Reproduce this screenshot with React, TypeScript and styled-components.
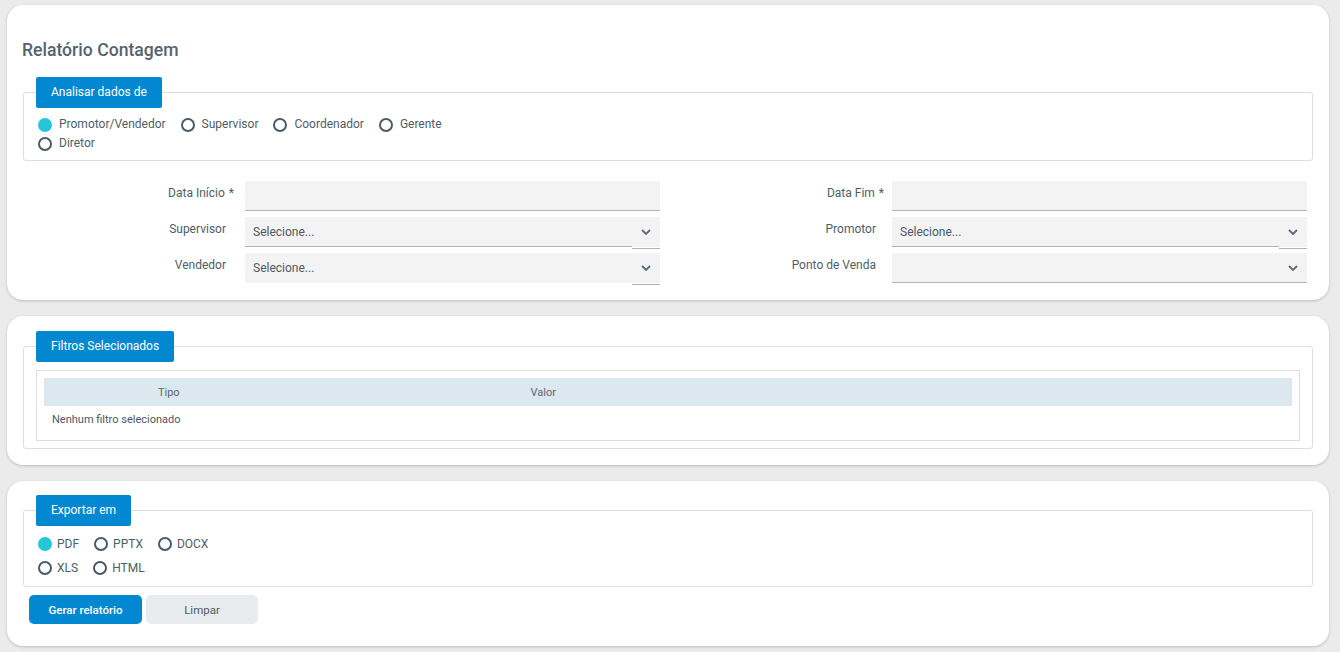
import React from 'react';
import styled, { createGlobalStyle } from 'styled-components';

const GlobalStyle = createGlobalStyle`
  html, body { margin: 0; padding: 0; background: #ebebeb; }
  body { font-family: Roboto, "Liberation Sans", Arial, sans-serif; color: #4f5d69; }
  * { box-sizing: border-box; }
`;

const Page = styled.div`
  display: flex;
  flex-direction: column;
  gap: 16px;
  padding: 5px 11px 6px 7px;
`;

const Card = styled.section<{ $pad: string }>`
  background: #fff;
  border-radius: 16px;
  box-shadow: 0 1px 3px rgba(0, 0, 0, 0.2);
  padding: ${(p) => p.$pad};
`;

const Title = styled.h1`
  margin: 18px 0 16px -1px;
  font-size: 17.6px;
  line-height: 22px;
  font-weight: 500;
  color: #56636e;
`;

const Group = styled.fieldset<{ $pb: number }>`
  margin: 0;
  min-width: 0;
  border: 1px solid #dedede;
  border-radius: 3px;
  padding: 0 12px ${(p) => p.$pb}px;
`;

const Legend = styled.legend`
  padding: 0 15px;
  height: 31px;
  line-height: 31px;
  background: #0288d1;
  color: #fff;
  font-size: 12px;
  border-radius: 2px;
`;

const RadioGroup = styled.div<{ $max: number; $lh: number; $mt: number }>`
  display: flex;
  flex-wrap: wrap;
  max-width: ${(p) => p.$max}px;
  margin-top: ${(p) => p.$mt}px;
  padding-left: 2px;
  line-height: ${(p) => p.$lh}px;
  font-size: 12px;
`;

const RadioItem = styled.label<{ $gap: number }>`
  display: inline-flex;
  align-items: center;
  gap: ${(p) => p.$gap}px;
  margin-right: 15px;
  color: #4f5d69;
  white-space: nowrap;
`;

const RadioDot = styled.span<{ $on: boolean }>`
  width: 14px;
  height: 14px;
  border-radius: 50%;
  border: 2px solid ${(p) => (p.$on ? '#26c6da' : '#4a5a66')};
  background: ${(p) => (p.$on ? '#26c6da' : '#fff')};
  flex: none;
`;

const FormGrid = styled.div`
  display: grid;
  grid-template-columns: 222px 415px 232px 415px;
  row-gap: 6px;
  margin-top: 20px;
`;

const FieldLabel = styled.div<{ $pr: number }>`
  text-align: right;
  padding: 4px ${(p) => p.$pr}px 0 0;
  font-size: 12px;
  line-height: 16px;
  color: #4f5d69;
`;

const Req = styled.span`
  margin-left: 4px;
  margin-right: -8px;
`;

const TextInput = styled.div`
  height: 30px;
  background: #f3f3f3;
  border-bottom: 1px solid #a9b7c2;
`;

const SelectBox = styled.div`
  display: flex;
  align-items: flex-start;
  height: 30px;
`;

const SelectValue = styled.div<{ $line: boolean }>`
  flex: 1;
  height: 30px;
  display: flex;
  align-items: center;
  padding: 1px 8px 0;
  background: #f3f3f3;
  border-bottom: 1px solid ${(p) => (p.$line ? '#a9b7c2' : 'transparent')};
  font-size: 12px;
  color: #4f5a63;
`;

const SelectArrow = styled.div<{ $drop: boolean }>`
  width: 28px;
  height: ${(p) => (p.$drop ? 32 : 30)}px;
  padding-bottom: ${(p) => (p.$drop ? 1 : 0)}px;
  display: flex;
  align-items: center;
  justify-content: center;
  background: #f3f3f3;
  background-clip: content-box;
  border-bottom: 1px solid #a9b7c2;
`;

const TableBox = styled.div`
  margin-top: 8px;
  border: 1px solid #dedede;
  padding: 7px;
`;

const TableHead = styled.div`
  display: grid;
  grid-template-columns: 20% 40% 40%;
  height: 28px;
  align-items: center;
  background: #dce8ef;
  font-size: 11px;
  color: #5b6770;
  text-align: center;
`;

const TableEmpty = styled.div`
  height: 27px;
  display: flex;
  align-items: center;
  padding-left: 8px;
  font-size: 11px;
  color: #4b5a66;
`;

const ButtonRow = styled.div`
  display: flex;
  gap: 4px;
  margin: 8px 0 0 6px;
`;

const Button = styled.button<{ $primary?: boolean }>`
  height: 29px;
  width: ${(p) => (p.$primary ? 113 : 112)}px;
  border: none;
  border-radius: 5px;
  font-family: inherit;
  font-size: 11.5px;
  font-weight: ${(p) => (p.$primary ? 500 : 400)};
  background: ${(p) => (p.$primary ? '#0288d1' : '#e9ecef')};
  color: ${(p) => (p.$primary ? '#fff' : '#4f5b66')};
  cursor: pointer;
`;

const Chevron = () => (
  <svg width="10" height="6" viewBox="0 0 10 6">
    <path d="M1 1 L5 5 L9 1" fill="none" stroke="#5a6b79" strokeWidth="1.8" />
  </svg>
);

type Opt = { label: string; on?: boolean };

const Radios: React.FC<{ items: Opt[]; max: number; lh: number; mt: number; gap: number }> = ({ items, max, lh, mt, gap }) => (
  <RadioGroup $max={max} $lh={lh} $mt={mt}>
    {items.map((it) => (
      <RadioItem key={it.label} $gap={gap}>
        <RadioDot $on={!!it.on} />
        {it.label}
      </RadioItem>
    ))}
  </RadioGroup>
);

const Select: React.FC<{ value?: string; line?: boolean; drop?: boolean }> = ({ value = '', line = true, drop = true }) => (
  <SelectBox>
    <SelectValue $line={line}>{value}</SelectValue>
    <SelectArrow $drop={drop}>
      <Chevron />
    </SelectArrow>
  </SelectBox>
);

export default function App() {
  return (
    <>
      <GlobalStyle />
      <Page>
        <Card $pad="16px 16px 17px">
          <Title>Relatório Contagem</Title>
          <Group $pb={7}>
            <Legend>Analisar dados de</Legend>
            <Radios
              max={430}
              lh={19}
              mt={7}
              gap={7}
              items={[
                { label: 'Promotor/Vendedor', on: true },
                { label: 'Supervisor' },
                { label: 'Coordenador' },
                { label: 'Gerente' },
                { label: 'Diretor' },
              ]}
            />
          </Group>
          <FormGrid>
            <FieldLabel $pr={19}>
              Data Início<Req>*</Req>
            </FieldLabel>
            <TextInput />
            <FieldLabel $pr={16}>
              Data Fim<Req>*</Req>
            </FieldLabel>
            <TextInput />

            <FieldLabel $pr={19}>Supervisor</FieldLabel>
            <Select value="Selecione..." />
            <FieldLabel $pr={16}>Promotor</FieldLabel>
            <Select value="Selecione..." />

            <FieldLabel $pr={19}>Vendedor</FieldLabel>
            <Select value="Selecione..." line={false} />
            <FieldLabel $pr={16}>Ponto de Venda</FieldLabel>
            <Select drop={false} />
          </FormGrid>
        </Card>

        <Card $pad="15px 16px 16px">
          <Group $pb={7}>
            <Legend>Filtros Selecionados</Legend>
            <TableBox>
              <TableHead>
                <span>Tipo</span>
                <span>Valor</span>
                <span />
              </TableHead>
              <TableEmpty>Nenhum filtro selecionado</TableEmpty>
            </TableBox>
          </Group>
        </Card>

        <Card $pad="14px 16px 22px">
          <Group $pb={6}>
            <Legend>Exportar em</Legend>
            <Radios
              max={200}
              lh={24}
              mt={6}
              gap={5}
              items={[
                { label: 'PDF', on: true },
                { label: 'PPTX' },
                { label: 'DOCX' },
                { label: 'XLS' },
                { label: 'HTML' },
              ]}
            />
          </Group>
          <ButtonRow>
            <Button $primary>Gerar relatório</Button>
            <Button>Limpar</Button>
          </ButtonRow>
        </Card>
      </Page>
    </>
  );
}
